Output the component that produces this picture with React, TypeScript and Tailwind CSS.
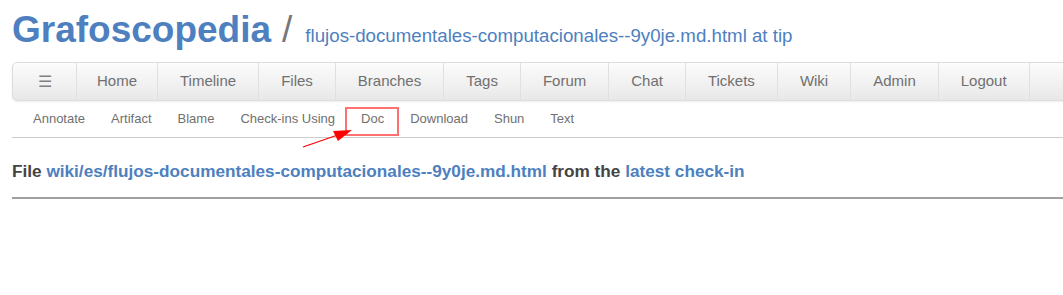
import React from 'react';

const MAIN_MENU = ['Home', 'Timeline', 'Files', 'Branches', 'Tags', 'Forum', 'Chat', 'Tickets', 'Wiki', 'Admin', 'Logout'];
const SUB_MENU = ['Annotate', 'Artifact', 'Blame', 'Check-ins Using', 'Doc', 'Download', 'Shun', 'Text'];

const App: React.FC = () => {
    return (
        <div className="w-[1063px] h-[295px] overflow-hidden bg-white font-['Liberation_Sans',Arial,sans-serif]">
            <div className="w-[1090px] pl-[12px]">
                {/* header */}
                <div className="flex items-baseline h-[52px] pt-[7px]">
                    <span className="text-[37px] font-bold text-[#4e7fbf] leading-[46px]">Grafoscopedia</span>
                    <span className="text-[37px] text-[#777] ml-[11px] mr-[13px] leading-[46px]">/</span>
                    <span className="text-[18.7px] text-[#4e7fbf]">flujos-documentales-computacionales--9y0je.md.html at tip</span>
                </div>

                {/* main menu */}
                <div className="mt-[10px] flex h-[39px] rounded-l-[5px] border border-[#ddd] bg-gradient-to-b from-[#fcfcfc] to-[#e8e8e8] shadow-[0_1px_2px_rgba(0,0,0,0.08)]">
                    <div className="w-[64px] flex items-center justify-center border-r border-[#e0e0e0] text-[16px] text-[#808080]">☰</div>
                    {MAIN_MENU.map(item => (
                        <div key={item} className={`flex items-center border-r border-[#e0e0e0] text-[15px] text-[#707070] ${item === 'Home' ? 'px-[20px]' : 'px-[22px]'}`}>
                            {item}
                        </div>
                    ))}
                </div>

                {/* sub menu */}
                <div className="relative flex h-[37px] items-center pl-[8px] border-b border-[#ccc]">
                    {SUB_MENU.map(item => (
                        <div key={item} className="px-[13px] text-[13px] text-[#707070]">
                            {item}
                        </div>
                    ))}
                    <div className="absolute left-[333px] top-[6px] w-[54px] h-[29px] border-2 border-[#ff7070]" />
                </div>

                {/* annotation arrow */}
                <svg className="absolute left-0 top-0 pointer-events-none" width="1063" height="295">
                    <line x1="303" y1="147" x2="342" y2="133.5" stroke="#f00" strokeWidth="1.3" />
                    <polygon points="352,130 333,131 338,141" fill="#f00" />
                </svg>

                {/* file line */}
                <div className="pt-[21px] h-[59px] text-[17.2px] font-bold text-[#444]">
                    File <span className="text-[#4e7fbf]">wiki/es/flujos-documentales-computacionales--9y0je.md.html</span> from the <span className="text-[#4e7fbf]">latest check-in</span>
                </div>
                <div className="h-[2px] bg-[#a0a0a0]" />
            </div>
        </div>
    );
};

export default App;
